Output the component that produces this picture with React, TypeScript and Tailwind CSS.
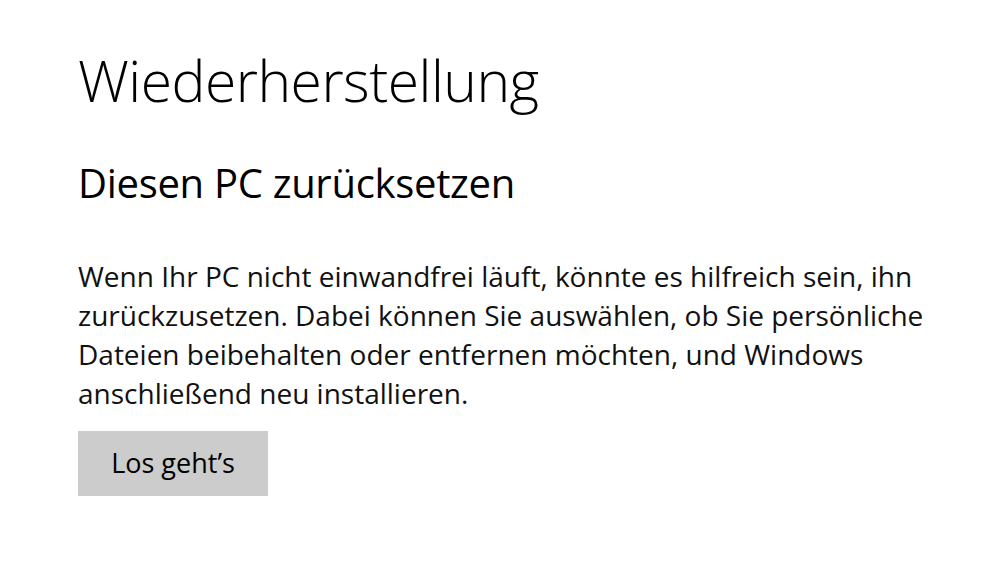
export default function App() {
  return (
    <main
      className="min-h-[563px] w-full bg-white pl-[78px] pt-[40px] text-black"
      style={{ fontFamily: '"Open Sans", "Noto Sans", sans-serif' }}
    >
      <h1 className="text-[57px] font-light leading-[80px] tracking-[-0.5px]">
        Wiederherstellung
      </h1>
      <h2 className="mt-[38px] text-[40px] font-normal leading-[50px] tracking-[-0.3px]">
        Diesen PC zurücksetzen
      </h2>
      <p className="mt-[49px] max-w-[860px] text-[28px] leading-[39px] text-[#111]">
        Wenn Ihr PC nicht einwandfrei läuft, könnte es hilfreich sein, ihn
        zurückzusetzen. Dabei können Sie auswählen, ob Sie persönliche
        Dateien beibehalten oder entfernen möchten, und Windows anschließend
        neu installieren.
      </p>
      <button
        type="button"
        className="mt-[18px] h-[65px] w-[190px] bg-[#cccccc] text-[27px] text-black"
      >
        Los geht’s
      </button>
    </main>
  );
}
